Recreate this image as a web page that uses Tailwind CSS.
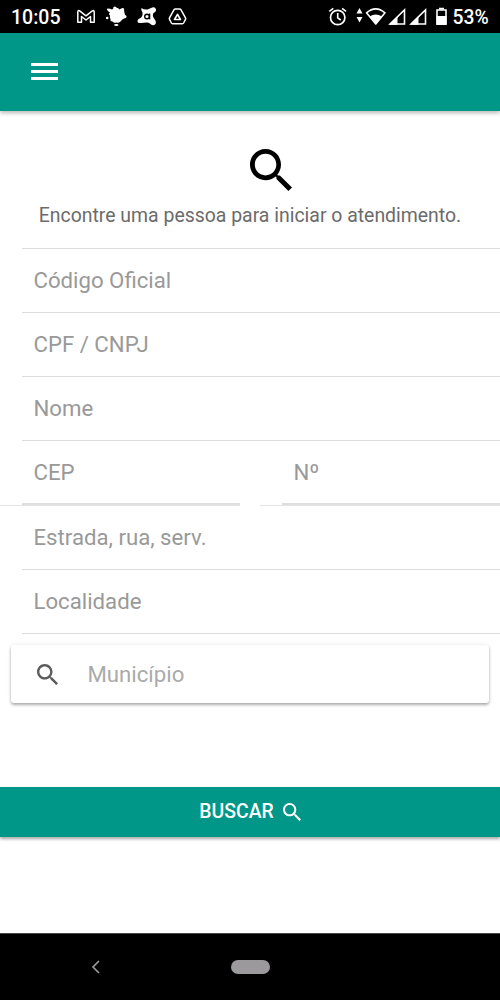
<!DOCTYPE html>
<html lang="pt-BR">
<head>
<meta charset="utf-8">
<title>Atendimento</title>
<script src="https://cdn.jsdelivr.net/npm/@tailwindcss/browser@4"></script>
</head>
<body class="bg-white">
<svg class="hidden">
  <symbol id="search" viewBox="64 64 384 384"><path d="M337.509 305.372h-17.501l-6.571-5.486c20.791-25.232 33.922-57.054 33.922-93.257C347.358 127.632 283.896 64 205.135 64 127.452 64 64 127.632 64 206.629s63.452 142.628 142.225 142.628c35.011 0 67.831-13.167 92.991-34.008l6.561 5.487v17.551L415.18 448 448 415.086 337.509 305.372zm-131.284 0c-54.702 0-98.463-43.887-98.463-98.743 0-54.858 43.761-98.742 98.463-98.742 54.7 0 98.462 43.884 98.462 98.742 0 54.856-43.762 98.743-98.462 98.743z"/></symbol>
</svg>
<div class="flex h-[1000px] w-[500px] flex-col overflow-hidden bg-white font-['Roboto',sans-serif]">
  <div class="flex h-[33px] shrink-0 items-center bg-black text-white">
    <span class="ml-[11px] w-[65px] pt-[3px] text-[19.500px] leading-none font-medium whitespace-nowrap">10:05</span>
    <svg class="h-[33px] w-[114px]" viewBox="76 0 114 33">
      <path d="M77.800 22.200V12.200Q77.800 9.500 80 11.200L86 15.800L92 11.200Q94.200 9.500 94.200 12.200V22.200H90.500V16.500L86 20L81.500 16.500V22.200Z" fill="none" stroke="#fff" stroke-width="1.500" stroke-linejoin="round"/>
      <path d="M113.500 7Q115.500 5.500 117 8Q118.500 7.500 119.500 9.500Q122.500 7 124 8.500Q124 11 124.500 13Q124.500 15 126.500 16Q127 18 124 18.500Q122 19.500 120.500 21.500Q118.500 23.500 116.500 22.500Q114 23.500 112.500 21.500Q110 21.500 110.500 19Q109.500 17.500 110 15.500Q108 14 110 12.500Q105.500 9.500 107.500 8.500Q110.500 8.500 112 9.500Q113.500 9 113.500 7Z" fill="#fff"/>
      <circle cx="107.200" cy="18" r="1.300" fill="#fff"/><ellipse cx="116.300" cy="25" rx="2.200" ry="1" fill="#fff"/>
      <path d="M141.500 8q2.500 2 6 1.500l3.500-1.500q4-1.800 5 1.300.4 2.500-2.500 3.700-1.500 2.500.5 5.500 2.800 3 1.500 5.500-2.300 2.500-5 0-1.500-1.800-4-1.500l-5 .5q-4.500.5-4-2.500.5-2 3-2.500 2.500-2 2-5.500-2-2-1-4.500Z" fill="#fff"/>
      <circle cx="147" cy="16.500" r="2.300" fill="none" stroke="#000" stroke-width="1.400"/><path d="M149.600 13.500v5.800" stroke="#000" stroke-width="1.400"/>
      <path d="M175.300 9h4.400q.8 0 1.200.7l4.600 8.200q.4.700 0 1.400l-1.900 3.700q-.4.700-1.200.7h-9.800q-.8 0-1.200-.7l-1.900-3.700q-.4-.7 0-1.400l4.600-8.200q.4-.7 1.200-.7Z" fill="none" stroke="#fff" stroke-width="1.500"/>
      <path d="M177.500 14.300l3 5.200h-6Z" fill="none" stroke="#fff" stroke-width="1.600" stroke-linejoin="round"/>
    </svg>
    <svg class="ml-[138px] h-[33px] w-[122px]" viewBox="328 0 122 33" fill="none" stroke="#fff">
      <circle cx="337.700" cy="17.500" r="7.200" stroke-width="1.700"/>
      <path d="M337.700 13V17.800L340.700 20M329.300 11.400l4-3M346.100 11.400l-4-3" stroke-width="1.600"/>
      <path d="M359.500 8l3 5.500h-6ZM359.500 22.500l3-5.500h-6Z" fill="#fff" stroke="none"/>
      <path d="M366.500 12.800Q375.700 4.800 385 12.800L375.800 24Z" stroke-width="1.600" stroke-linejoin="round"/>
      <path d="M369.500 16.500Q375.700 12.500 382 16.500L375.800 24.500Z" fill="#fff" stroke="none"/>
      <path d="M390 24L404.500 10V24ZM411 24L425.500 10V24Z" stroke-width="1.600"/>
      <path d="M389 24.800L397.500 16V24.800ZM410 24.800L418.500 16V24.800Z" fill="#fff" stroke="none"/>
      <path d="M437 10h9v14h-9Z" stroke-width="1.600"/><path d="M439 7.700h5v2h-5ZM436.500 16h10v9h-10Z" fill="#fff" stroke="none"/>
    </svg>
    <span class="ml-[2.500px] pt-[2px] text-[19.300px] leading-none font-medium whitespace-nowrap">53%</span>
  </div>

  <header class="flex h-[78px] shrink-0 items-center bg-[#009688] pb-0.5 pl-[31px] shadow-[0_2px_4px_rgba(0,0,0,0.28)]">
    <div class="flex w-[27px] flex-col gap-1">
      <div class="h-[3px] bg-white"></div><div class="h-[3px] bg-white"></div><div class="h-[3px] bg-white"></div>
    </div>
  </header>

  <main class="flex flex-1 flex-col">
    <svg class="mt-[38px] ml-[250px] size-[42px] shrink-0"><use href="#search"/></svg>
    <p class="mt-[13px] h-6 text-center text-[19.430px] leading-6 whitespace-nowrap text-[#6b6b6b]">Encontre uma pessoa para iniciar o atendimento.</p>
    <div class="mt-5 ml-[22px] border-t border-[#dcdcdc] text-[22.200px] text-[#999]">
      <div class="flex h-16 items-center border-b border-[#dcdcdc] pt-px pl-[11.500px]">Código Oficial</div>
      <div class="flex h-16 items-center border-b border-[#dcdcdc] pt-px pl-[11.500px]">CPF / CNPJ</div>
      <div class="flex h-16 items-center border-b border-[#dcdcdc] pt-px pl-[11.500px]">Nome</div>
    </div>
    <div class="flex h-[65px] gap-5 text-[22.200px] text-[#999]">
      <div class="w-[240px] border-b border-[#e4e4e4] pl-[22px]"><div class="flex h-16 items-center border-b-2 border-[#dedede] pt-0.5 pl-[11.500px]">CEP</div></div>
      <div class="w-[240px] border-b border-[#e4e4e4] pl-[22px]"><div class="flex h-16 items-center border-b-2 border-[#dedede] pt-0.5 pl-[11.500px]">Nº</div></div>
    </div>
    <div class="ml-[22px] text-[22.200px] text-[#999]">
      <div class="flex h-16 items-center border-b border-[#dcdcdc] pt-px pl-[11.500px]">Estrada, rua, serv.</div>
      <div class="flex h-16 items-center border-b border-[#dcdcdc] pt-px pl-[11.500px]">Localidade</div>
    </div>
    <div class="mx-[11px] mt-[11px] flex h-[58px] items-center rounded-[3px] bg-white pl-[26px] shadow-[0_2px_3px_rgba(0,0,0,0.3),0_0_4px_rgba(0,0,0,0.08)]">
      <svg class="size-[21px] fill-[#5b5b5b]"><use href="#search"/></svg>
      <span class="ml-[29.500px] pt-0.5 text-[22.200px] text-[#aaa]">Município</span>
    </div>
    <div class="mt-[84px] flex h-[50px] items-center justify-center bg-[#009688] text-white shadow-[0_2px_3px_rgba(0,0,0,0.35)]">
      <span class="text-[19.400px] font-medium">BUSCAR</span>
      <svg class="ml-[9px] size-[18px] fill-white"><use href="#search"/></svg>
    </div>
  </main>

  <nav class="flex h-[67px] shrink-0 items-center border-t border-[#444] bg-black">
    <svg class="ml-[91px] h-[14px] w-[9px]" viewBox="0 0 9 14" fill="none" stroke="#999" stroke-width="1.700"><path d="M8 1L2 7l6 6"/></svg>
    <div class="ml-[131px] h-[14px] w-[39px] rounded-full bg-[#9b999c]"></div>
  </nav>
</div>
</body>
</html>
